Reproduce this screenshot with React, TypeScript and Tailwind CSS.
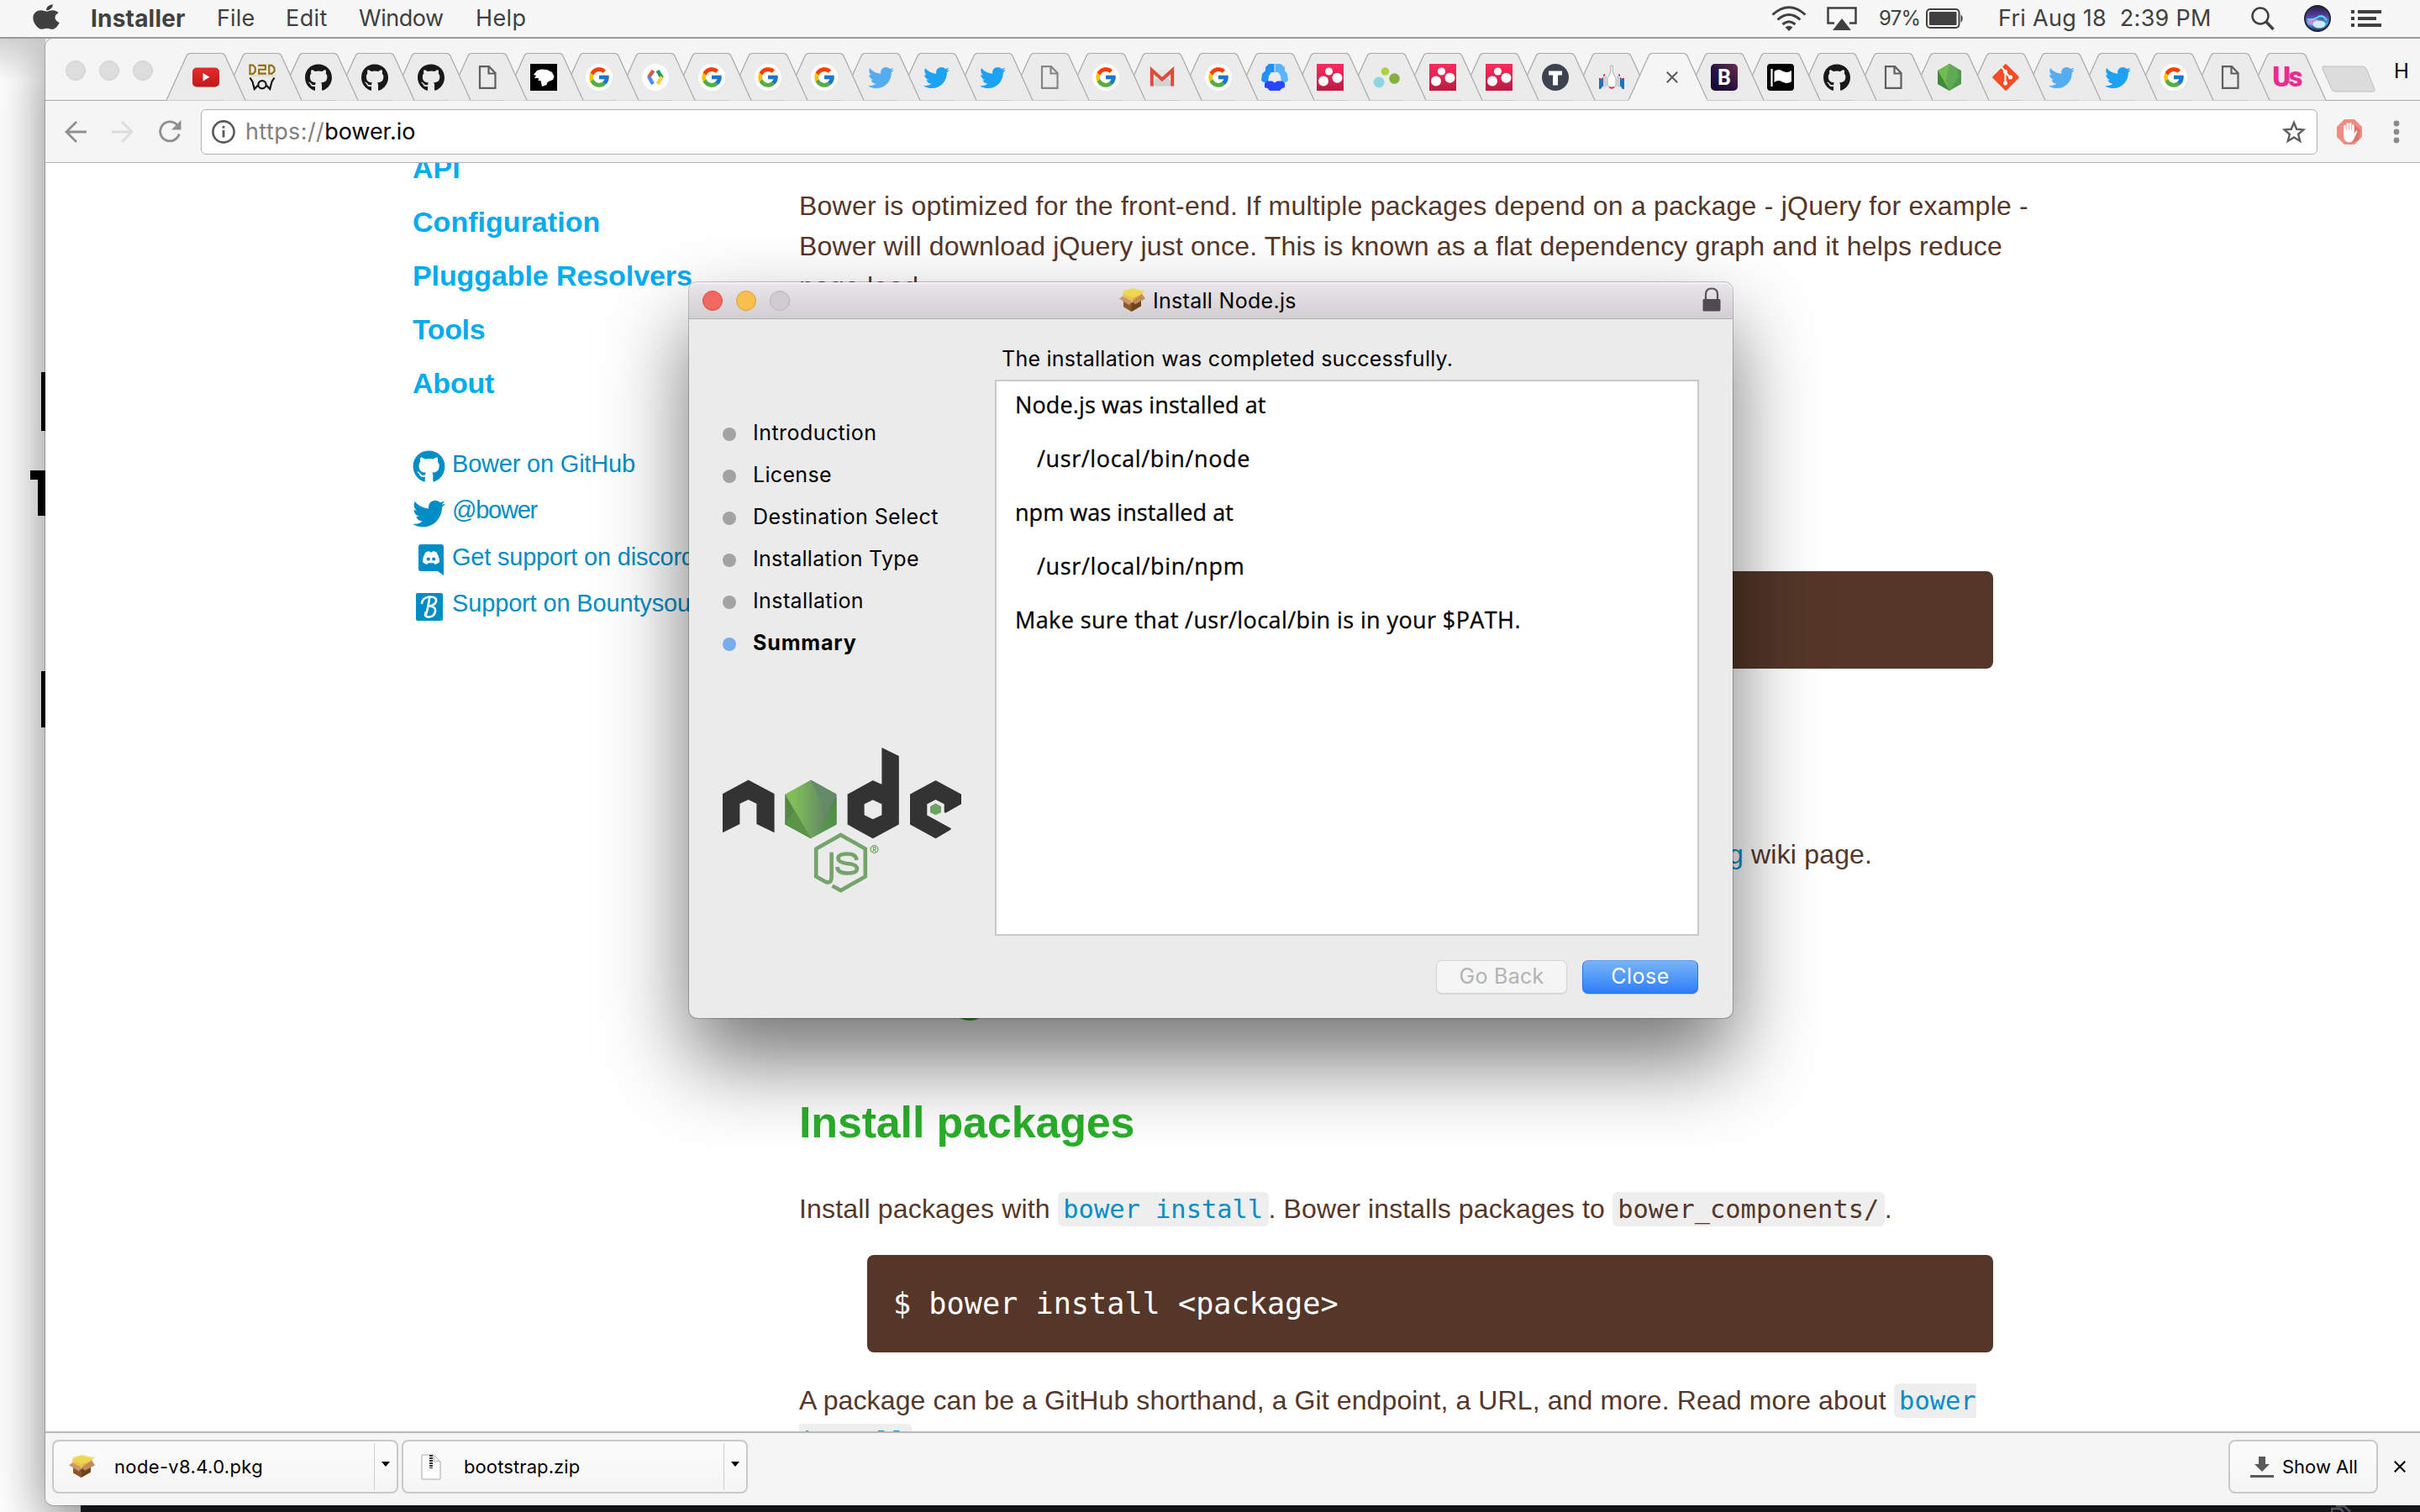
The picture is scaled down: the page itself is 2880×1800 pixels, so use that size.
import React from "react";
import { FaApple, FaGithub, FaTwitter } from "react-icons/fa";
import { FcGoogle } from "react-icons/fc";

/* ---------- shared icons ---------- */

const PackageIcon = ({ className }: { className: string }) => (
  <svg viewBox="0 0 31 30" className={className} preserveAspectRatio="none">
    <path d="M5 13 L15 18 L26 12 L26 22 L14.5 29 L5 23Z" fill="#8a5a2c" />
    <path d="M15 18 L26 12 L26 22 L14.5 29Z" fill="#6f431c" />
    <path d="M4 6 L15 1 L27 5 L16 12Z" fill="#e2c64a" />
    <path d="M4 6 L16 11.5 L14.5 17 L5 13Z" fill="#e8c455" />
    <path d="M16 11.5 L27 5 L26 12 L15 17Z" fill="#d9b93c" />
    <path d="M5 3 L16 0 L28 3 L31 3 L27 8 L16 12 L4 7Z" fill="#f0d94f" fillOpacity="0.85" />
    <path d="M4 10 L15 16 L12 21 L0 13Z" fill="#cf9767" />
    <path d="M27 7 L31 13 L19 20 L15 16Z" fill="#c58b5c" />
  </svg>
);

const ZipIcon = () => (
  <svg viewBox="0 0 24 31" className="ml-[3px] h-[31px] w-6">
    <path d="M1 1 H15 L23 9 V30 H1Z" fill="#fff" stroke="#a9a9a9" strokeWidth="1" />
    <path d="M15 1 L23 9 H15Z" fill="#ececec" stroke="#b5b5b5" strokeWidth="1" />
    <path d="M12 1 V17" stroke="#333" strokeWidth="4" strokeDasharray="2 1" />
  </svg>
);

/* ---------- favicons ---------- */

const GoogleIcon = () => (
  <span className="flex size-8 items-center justify-center rounded-full bg-white">
    <FcGoogle className="size-[28px]" />
  </span>
);

const DocIcon = ({ color = "#5f5f5f" }: { color?: string }) => (
  <svg viewBox="0 0 32 32" className="size-8">
    <path d="M7 3.2 H18 L25.5 11 V28.8 H7Z M17.5 3.5 V11.5 H25.5" fill="none" stroke={color} strokeWidth="2.2" />
  </svg>
);

const BerryIcon = () => (
  <svg viewBox="0 0 32 32" className="size-8">
    <defs>
      <linearGradient id="berry" x1="0" y1="0" x2="0" y2="1">
        <stop offset="0" stopColor="#ff2b5e" />
        <stop offset="1" stopColor="#b71c42" />
      </linearGradient>
    </defs>
    <rect width="32" height="32" fill="url(#berry)" />
    <circle cx="14.5" cy="9" r="4.6" fill="#fff" />
    <circle cx="24.5" cy="16.8" r="6" fill="#fff" />
    <circle cx="8" cy="20.5" r="6" fill="#fff" />
  </svg>
);

const favicons: Record<string, React.ReactNode> = {
  youtube: (
    <svg viewBox="0 0 32 32" className="size-8">
      <defs>
        <linearGradient id="yt" x1="0" y1="0" x2="0" y2="1">
          <stop offset="0" stopColor="#e52d27" />
          <stop offset="1" stopColor="#bf171d" />
        </linearGradient>
      </defs>
      <rect y="4.5" width="32" height="23" rx="5" fill="url(#yt)" />
      <path d="M12.5 11 L20.5 15.8 L12.5 20.6Z" fill="#fff" />
    </svg>
  ),
  d2d: (
    <svg viewBox="0 0 33 32" className="h-8 w-[33px]">
      <g fill="none" strokeWidth="2.2">
        <path stroke="#8f7112" d="M1.5 1 H5 L8 4 V9 L5 12 H1.5Z M11.500 1.500 H20.500 V6.500 H12.500 V11.500 H21.500 M25 1.500 H28.500 L31.500 4.500 V8.500 L28.500 11.500 H25Z" />
        <path stroke="#e6dfc4" d="M1 14 H33" />
        <path stroke="#111" d="M1.500 16.500 L4.500 21 L7 30.500 L11 26 M31.500 16.500 L28.500 21 L26 30.500 L22 26" />
        <circle cx="16.500" cy="25" r="4.800" stroke="#111" />
      </g>
    </svg>
  ),
  github: <FaGithub className="size-[33px] text-[#191717]" />,
  doc: <DocIcon />,
  docLight: <DocIcon color="#868686" />,
  lion: (
    <svg viewBox="0 0 32 32" className="size-8">
      <rect width="32" height="32" fill="#000" />
      <path d="M4 13 L8 8 L13 6.500 L20 7 L26 10 L28.500 15 L27 19 L23 20.500 L20.500 22 L19.500 25 L14 27 L12.500 20 L9.500 20 L10 17 L5 17 L7 14Z" fill="#fff" />
    </svg>
  ),
  google: <GoogleIcon />,
  dev: (
    <span className="flex size-8 items-center justify-center rounded-full bg-white">
      <svg viewBox="0 0 24 18" className="h-[18px] w-6" fill="none" strokeWidth="4.4">
        <path d="M9.5 1 L4 9" stroke="#dd5347" />
        <path d="M4 8 L9 17" stroke="#4c8bf5" />
        <path d="M14.5 1 L20 10" stroke="#1aa15f" />
        <path d="M20 8.5 L14.5 17" stroke="#ffce44" />
      </svg>
    </span>
  ),
  twitterLight: <FaTwitter className="size-[31px] text-[#55acee]" />,
  twitter: <FaTwitter className="size-[31px] text-[#1da1f2]" />,
  gmail: (
    <svg viewBox="0 0 32 32" className="size-8">
      <path d="M3 7 H29 V26.500 H3Z" fill="#e6e6e6" />
      <path d="M9 17 L16 21 L23 17 L29 26.500 H3Z" fill="#d2d2d2" />
      <path d="M3.800 26.500 V7.500 L16 18.500 L28.200 7.500 V26.500" fill="none" stroke="#dd4b39" strokeWidth="4" />
    </svg>
  ),
  rings: (
    <svg viewBox="0 0 32 32" className="size-8">
      <path d="M15.500 0 H9 L5 4 V8 L1 12 L0 20 L3 22 H8 L9 14 L12 10 H15.500Z" fill="#1e90ff" />
      <path d="M16.500 0 H23 L28 4 V8 L31 12 L32 20 L29 22 H24 L23 14 L20 10 H16.500Z" fill="#58b6ff" />
      <path d="M7 20.500 H13 L16 22.500 L19 20.500 H25 L28 23 V28 L24 29.500 L22 32 H10 L8 29.500 L4 28 V23Z" fill="#2846ff" />
    </svg>
  ),
  berry: <BerryIcon />,
  bubbles: (
    <svg viewBox="0 0 32 32" className="size-8">
      <circle cx="14.500" cy="9" r="4.800" fill="#aed13f" />
      <circle cx="25.500" cy="17.500" r="6.300" fill="#84b13c" />
      <circle cx="7" cy="22" r="6.500" fill="#8fd5e3" />
    </svg>
  ),
  t: (
    <svg viewBox="0 0 32 32" className="size-8">
      <circle cx="16" cy="16" r="16" fill="#3d444f" />
      <path d="M8 8.500 H24 V13.500 H19 V25.500 H13 V13.500 H8Z" fill="#fff" />
    </svg>
  ),
  rocket: (
    <svg viewBox="0 0 32 32" className="size-8">
      <path d="M1 19 L6 16 V26 L3 30 H1Z M31 19 L26 16 V26 L29 30 H31Z" fill="#1f72bb" />
      <path d="M6 15 L10 14 V27 L6 28Z M26 15 L22 14 V27 L26 28Z" fill="#cfd1d3" />
      <path d="M14.800 2 H17.200 V9 L19 14 L21 17 V25 L19 28 H13 L11 25 V17 L13 14 L14.800 9Z" fill="#fff" stroke="#a9abae" />
      <path d="M1 17 H3 V19 H1Z M29 17 H31 V19 H29Z M6 13 L8 12 V14 L6 15Z M26 13 L24 12 V14 L26 15Z M13 27 L16 28 L19 27 V28.500 L16 30 L13 28.500Z" fill="#e5203a" />
    </svg>
  ),
  bootstrap: (
    <span className="flex size-8 items-center justify-center rounded-[5px] bg-linear-to-bl from-[#6b2f52] via-[#2c1540] to-[#10082b] font-[Roboto] text-[25px] leading-none font-bold text-white">
      B
    </span>
  ),
  flag: (
    <svg viewBox="0 0 32 32" className="size-8">
      <rect width="32" height="32" rx="4" fill="#000" />
      <path d="M5.500 6 V27" stroke="#fff" strokeWidth="2.200" />
      <path d="M8.500 9 Q13 5.500 18 8.500 Q24 11.500 29 8 V21 Q24 24.500 18 21.500 Q13 18.500 8.500 22Z" fill="#fff" />
    </svg>
  ),
  node: (
    <svg viewBox="0 0 32 32" className="size-8">
      <path d="M16 0 L30 8 V24 L16 32 L2 24 V8Z" fill="#4f9a48" />
      <path d="M2 8 L16 0 L22 4 L16 32Z" fill="#72bb50" />
      <path d="M16 0 L25 5 L27 15 L16 32 L12 20Z" fill="#62a957" />
      <path d="M2 8 L16 32 L2 24Z" fill="#3f8a3c" />
    </svg>
  ),
  git: (
    <svg viewBox="0 0 32 32" className="size-8">
      <path d="M16 1.500 L30.500 16 L16 30.500 L1.500 16Z" fill="#f54d27" stroke="#f54d27" strokeWidth="2.500" strokeLinejoin="round" />
      <path d="M11 4 L15.500 9 V23 M15.500 10 L21 16" stroke="#fff" strokeWidth="2" fill="none" />
      <circle cx="15.500" cy="9.500" r="2.500" fill="#fff" />
      <circle cx="15.500" cy="23" r="2.500" fill="#fff" />
      <circle cx="21.500" cy="16" r="2.500" fill="#fff" />
    </svg>
  ),
  us: (
    <span className="font-[Roboto] text-[33px] leading-8 font-black tracking-[-2.500px] text-[#ed2a90]">Us</span>
  ),
  close: (
    <svg viewBox="0 0 14 14" className="ml-2.5 size-3.5">
      <path d="M0.800 0.800 L13.200 13.200 M13.200 0.800 L0.800 13.200" stroke="#5a5a5a" strokeWidth="2" />
    </svg>
  ),
};

const tabs = [
  "youtube", "d2d", "github", "github", "github", "doc", "lion", "google", "dev", "google",
  "google", "google", "twitterLight", "twitter", "twitter", "docLight", "google", "gmail", "google", "rings",
  "berry", "bubbles", "berry", "berry", "t", "rocket", "close", "bootstrap", "flag", "github",
  "doc", "node", "git", "twitterLight", "twitter", "google", "doc", "us",
];

const Tab = ({ name, index }: { name: string; index: number }) => {
  const active = name === "close";
  return (
    <div className="relative -mr-[27.080px] h-[57px] w-[94px] shrink-0" style={{ zIndex: active ? 60 : 50 - index }}>
      <svg viewBox="0 0 94 57" className="absolute inset-0 h-[57px] w-[94px] overflow-visible">
        <path
          d="M0 56.500 L24 3.500 Q25.500 0.500 28 0.500 H65.500 Q68.500 0.500 70 3.500 L94 56.500"
          fill={active ? "#f5f5f5" : "#ebebeb"}
          stroke="#a8a8a8"
          strokeWidth="1.200"
        />
        {active && <path d="M0.500 56.500 H93.500" stroke="#f5f5f5" strokeWidth="2" />}
      </svg>
      <div className="relative mt-[13px] ml-[31px] flex size-8 items-center justify-center">{favicons[name]}</div>
    </div>
  );
};

/* ---------- menu bar ---------- */

const MenuBar = () => (
  <header className="relative z-20 flex h-[46px] shrink-0 items-center border-b-2 border-[#9a9a9a] bg-[#f7f7f7] font-[Inter] text-[27px] leading-[44px] text-[#404040]">
    <FaApple className="mr-[37px] mb-1 ml-[39px] h-[34px] w-[32px]" preserveAspectRatio="none" />
    <span className="w-[150px] text-[28px] font-bold tracking-[0.200px]">Installer</span>
    <span className="w-[82px] tracking-[0.160px]">File</span>
    <span className="w-[87px] tracking-[0.400px]">Edit</span>
    <span className="w-[139px] tracking-[-0.470px]">Window</span>
    <span className="tracking-[0.380px]">Help</span>
    <div className="ml-auto flex h-[44px] items-center pr-[46px]">
      <div className="w-[66px]">
        <svg viewBox="0 0 42 30" className="h-[30px] w-[42px]" fill="none" stroke="#404040" strokeWidth="3">
          <path d="M1.500 10.500 Q21 -7 40.500 10.500 M7.500 16.500 Q21 4.500 34.500 16.500 M13.500 22 Q21 15.500 28.500 22" />
          <path d="M16.500 25.500 Q21 22 25.500 25.500 L21 30Z" fill="#404040" stroke="none" />
        </svg>
      </div>
      <div className="w-[62px]">
        <svg viewBox="0 0 36 28" className="h-7 w-9">
          <path d="M9 19.500 H1.500 V1.500 H34.500 V19.500 H27" fill="none" stroke="#404040" strokeWidth="2.500" />
          <path d="M18 14 L29 28 H7Z" fill="#404040" />
        </svg>
      </div>
      <span className="w-[56px] text-[24px] tracking-[-0.750px]">97%</span>
      <div className="w-[86px]">
        <svg viewBox="0 0 46 24" className="h-6 w-[46px]">
          <rect x="1" y="1" width="38.500" height="22" rx="4" fill="none" stroke="#404040" strokeWidth="2" />
          <rect x="4" y="4" width="32.500" height="16" rx="1" fill="#404040" />
          <path d="M41.500 7 Q46 12 41.500 17Z" fill="#404040" />
        </svg>
      </div>
      <span className="w-[301px] tracking-[0.280px] whitespace-pre">Fri Aug 18  2:39 PM</span>
      <div className="w-[63px]">
        <svg viewBox="0 0 28 28" className="size-7" fill="none" stroke="#404040">
          <circle cx="11" cy="11" r="9.500" strokeWidth="2.500" />
          <path d="M17.500 17.500 L26.500 27" strokeWidth="3.500" />
        </svg>
      </div>
      <div className="w-[56px]">
        <svg viewBox="0 0 32 32" className="size-8">
          <defs>
            <linearGradient id="siri" x1="0" y1="0" x2="0" y2="1">
              <stop offset="0" stopColor="#241c4e" />
              <stop offset="0.400" stopColor="#5a3f9e" />
              <stop offset="0.700" stopColor="#3ba6dc" />
              <stop offset="1" stopColor="#22306e" />
            </linearGradient>
          </defs>
          <circle cx="16" cy="16" r="15" fill="url(#siri)" stroke="#22252e" strokeWidth="2" />
          <ellipse cx="10.500" cy="20" rx="6.500" ry="4" fill="#e58be8" fillOpacity="0.800" />
          <ellipse cx="18" cy="23" rx="7.500" ry="4.500" fill="#dff4ff" fillOpacity="0.900" />
          <path d="M4 17 Q12 18 17 14 Q22 11 27 18" stroke="#4de0ef" strokeWidth="2" fill="none" />
        </svg>
      </div>
      <svg viewBox="0 0 36 20" className="h-5 w-9" fill="#404040">
        <path d="M0 0H4V4H0Z M8 0H36V4H8Z M0 8H4V12H0Z M8 8H30V12H8Z M0 16H4V20H0Z M8 16H36V20H8Z" />
      </svg>
    </div>
  </header>
);

/* ---------- browser ---------- */

const TabStrip = () => (
  <div className="relative z-10 flex h-[74px] shrink-0 items-end rounded-tl-[10px] border-b border-[#a8a8a8] bg-[#f5f5f5]">
    <div className="mt-[26px] mr-4 ml-6 flex gap-4 self-start">
      {[0, 1, 2].map((i) => (
        <span key={i} className="size-6 rounded-full border border-[#d0d0d0] bg-[#dddddd]" />
      ))}
    </div>
    <div className="-mb-px flex">
      {tabs.map((name, i) => (
        <Tab key={i} name={name} index={i} />
      ))}
    </div>
    <svg viewBox="0 0 66 32" className="mb-[9px] ml-[21px] h-8 w-[66px] shrink-0">
      <path d="M3 1 H49 Q53 1 54.500 4.500 L64 28 Q65 31 61.500 31 H18 Q14 31 12.500 27.500 L2 4 Q1 1 3 1Z" fill="#dcdcdc" stroke="#bdbdbd" />
    </svg>
    <span className="mb-[20px] ml-[21px] font-[Inter] text-[24px] leading-7 text-black">H</span>
  </div>
);

const Toolbar = () => (
  <div className="flex h-[74px] shrink-0 items-center border-b border-[#b3b3b3] bg-[#f5f5f5] pl-[23px]">
    <svg viewBox="0 0 26 26" className="size-[26px]" fill="none" stroke="#8f8f8f" strokeWidth="2.800">
      <path d="M26 13 H2 M14 1 L2 13 L14 25" />
    </svg>
    <svg viewBox="0 0 26 26" className="ml-[30px] size-[26px]" fill="none" stroke="#dcdcdc" strokeWidth="2.800">
      <path d="M0 13 H24 M12 1 L24 13 L12 25" />
    </svg>
    <svg viewBox="0 0 28 27" className="ml-[29px] h-[27px] w-7" fill="none">
      <path d="M22.500 5.500 A11.500 11.500 0 1 0 25.200 16.500" stroke="#8f8f8f" strokeWidth="2.800" />
      <path d="M27.500 0 V11.500 H16Z" fill="#8f8f8f" />
    </svg>
    <div className="ml-[23px] flex h-[54px] w-[2519px] items-center rounded-[6px] border border-[#b0b0b0] bg-white pl-3 font-[Inter] text-[27px]">
      <svg viewBox="0 0 28 28" className="mr-3 size-7" fill="none" stroke="#5a5a5a">
        <circle cx="14" cy="14" r="12.600" strokeWidth="2.600" />
        <path d="M14 12 V20.500 M14 7 V9.800" strokeWidth="2.800" />
      </svg>
      <span className="pt-0.5 tracking-[0.400px] text-[#7f7f7f]">https://</span>
      <span className="pt-0.5 tracking-[-0.050px] text-black">bower.io</span>
      <svg viewBox="0 0 28 28" className="mr-[13px] ml-auto size-7" fill="none" stroke="#5f5f5f" strokeWidth="2.400">
        <path d="M14 3 L17.200 10.800 L25.500 11.400 L19.100 16.800 L21.200 25 L14 20.500 L6.800 25 L8.900 16.800 L2.500 11.400 L10.800 10.800Z" />
      </svg>
    </div>
    <svg viewBox="0 0 30 30" className="ml-[23px] size-[30px]">
      <path d="M9 0 H21 L30 9 V21 L21 30 H9 L0 21 V9Z" fill="#ef8d83" />
      <path d="M17 28 L26 25 L28 12 L20 6Z" fill="#d9776c" />
      <path d="M9.500 17 V8 M12.800 15 V5.500 M16.100 15 V5.500 M19.400 16 V7.500" stroke="#fff" strokeWidth="2.600" strokeLinecap="round" />
      <path d="M8.200 13 H20.700 V18 L23 13.500 Q24.500 13.500 24 15.500 L20 24 Q18 27.500 14.500 27.500 Q8.200 27 8.200 19Z" fill="#fff" />
    </svg>
    <svg viewBox="0 0 8 28" className="ml-[37px] h-7 w-2" fill="#8a8a8a">
      <circle cx="4" cy="4" r="3.400" />
      <circle cx="4" cy="14" r="3.400" />
      <circle cx="4" cy="24" r="3.400" />
    </svg>
  </div>
);

const SideLink = ({ icon, children, className }: { icon: React.ReactNode; children: React.ReactNode; className: string }) => (
  <li className={`flex h-[55.500px] items-center ${className}`}>
    <span className="flex w-[47px] shrink-0">{icon}</span>
    {children}
  </li>
);

const Sidebar = () => (
  <nav className="-mt-[26px] w-[460px] shrink-0 font-['Liberation_Sans'] whitespace-nowrap">
    <ul className="text-[34px] leading-[64px] font-bold text-[#00acee]">
      <li>API</li>
      <li className="tracking-[0.030px]">Configuration</li>
      <li className="tracking-[-0.090px]">Pluggable Resolvers</li>
      <li className="tracking-[-0.400px]">Tools</li>
      <li className="tracking-[-0.200px]">About</li>
    </ul>
    <ul className="mt-9 text-[29px] leading-[56px] text-[#008dc5]">
      <SideLink className="tracking-[-0.200px]" icon={<FaGithub className="mt-2 size-[39px]" />}>Bower on GitHub</SideLink>
      <SideLink className="tracking-[-1.250px]" icon={<FaTwitter className="mt-2 size-[39px]" />}>@bower</SideLink>
      <SideLink
        className="tracking-[-0.210px]"
        icon={
          <svg viewBox="0 0 30 37" className="mt-2 ml-[7px] h-[37px] w-[30px]">
            <path d="M3 0 H27 Q30 0 30 3 V37 L23 32 H3 Q0 32 0 29 V3 Q0 0 3 0Z" fill="#008dc5" />
            <path d="M8.500 9.500 Q11 8 13 8.200 L14 9.500 H16 L17 8.200 Q19 8 21.500 9.500 Q25 15 25 21 Q22.500 23.800 19.500 24 L18.500 22.300 H11.500 L10.500 24 Q7.500 23.800 5 21 Q5 15 8.500 9.500Z" fill="#fff" />
            <circle cx="11.800" cy="17.500" r="2.100" fill="#008dc5" />
            <circle cx="18.200" cy="17.500" r="2.100" fill="#008dc5" />
          </svg>
        }
      >
        Get support on discord
      </SideLink>
      <SideLink
        className="tracking-[-0.150px]"
        icon={
          <svg viewBox="0 0 32 33" className="mt-2 ml-1 h-[33px] w-8">
            <rect width="32" height="33" rx="2" fill="#008dc5" />
            <path d="M7 12 Q8 5 17 4.500 Q25 4.500 24 10 Q22.500 14.500 16 15.500 Q24 16 23 22 Q21.500 29 14 28.500 Q10 28 11.500 23.500 M16 7 Q14 20 11.500 27" fill="none" stroke="#fff" strokeWidth="2.600" strokeLinecap="round" />
          </svg>
        }
      >
        Support on Bountysource
      </SideLink>
    </ul>
  </nav>
);

const Code = ({ children, link }: { children: React.ReactNode; link?: boolean }) => (
  <code
    className={`rounded-[6px] bg-[#eeeeee] px-[6.400px] py-[3px] font-['DejaVu_Sans_Mono'] text-[30.400px] leading-none tracking-normal ${link ? "text-[#008dc5]" : "text-[#543729]"}`}
  >
    {children}
  </code>
);

const Article = () => (
  <article className="w-[1500px] shrink-0 pt-[27px] font-['Liberation_Sans'] text-[32px] leading-[48px] tracking-[0.180px] whitespace-nowrap text-[#543729]">
    <p>
      <span className="tracking-[0.220px]">
        Bower is optimized for the front-end. If multiple packages depend on a package - jQuery for example -
      </span>
      <br />
      <span className="tracking-[0.170px]">Bower will download jQuery just once. This is known as a flat dependency graph and it helps reduce</span>
      <br />
      page load.
    </p>
    <pre className="mt-[315px] ml-[81px] h-[116px] w-[1340px] rounded-[8px] bg-[#543729]" />
    <p className="mt-[197px] pl-[1106px]">
      <a className="text-[#008dc5]">g</a> wiki page.
    </p>
    <h2 className="mt-[97px] text-[66px] leading-[80px] font-bold tracking-[-1.200px] text-[#2bae2b]">Getting started</h2>
    <h3 className="mt-[86px] text-[52px] leading-[64px] font-bold tracking-[-0.150px] text-[#2bae2b]">Install packages</h3>
    <p className="mt-[47px] h-12">
      <span className="tracking-[0.170px]">Install packages with </span>
      <Code link>bower install</Code>
      <span className="tracking-[0.130px]">. Bower installs packages to </span>
      <Code>bower_components/</Code>.
    </p>
    <pre className="mt-[31px] ml-[81px] h-[116px] w-[1340px] rounded-[8px] bg-[#543729] pl-[31px] font-['DejaVu_Sans_Mono'] text-[35.200px] leading-[116px] tracking-normal text-white">
      $ bower install &lt;package&gt;
    </pre>
    <p className="mt-[33px]">
      <span className="tracking-[0.110px]">A package can be a GitHub shorthand, a Git endpoint, a URL, and more. Read more about </span>
      <Code link>
        bower
        <br />
        install
      </Code>
      .
    </p>
  </article>
);

const Download = ({ icon, name, className }: { icon: React.ReactNode; name: string; className: string }) => (
  <div className="mr-[4.500px] flex h-16 w-[411.500px] items-center rounded-[8px] border-2 border-[#c9c9c9] bg-linear-to-b from-[#fcfcfc] to-[#f5f5f5] pl-[18px]">
    <span className="flex w-[54px]">{icon}</span>
    <span className={className}>{name}</span>
    <span className="ml-auto flex h-14 w-[27px] items-center justify-center border-l border-[#cfcfcf] pb-1.5">
      <svg viewBox="0 0 10 6" className="h-1.5 w-2.5">
        <path d="M0 0 H10 L5 6Z" />
      </svg>
    </span>
  </div>
);

const DownloadShelf = () => (
  <footer className="flex h-[88px] shrink-0 items-start rounded-bl-[10px] border-t-2 border-[#b8b8b8] bg-[#f5f5f5] pt-2 pr-[17px] pl-2 font-[Inter] text-[22px] text-black">
    <Download icon={<PackageIcon className="h-7 w-[31px]" />} name="node-v8.4.0.pkg" className="tracking-[0.350px]" />
    <Download icon={<ZipIcon />} name="bootstrap.zip" className="tracking-[0.100px]" />
    <div className="ml-auto flex h-16 w-[178px] items-center rounded-[8px] border-2 border-[#c9c9c9] bg-linear-to-b from-[#fcfcfc] to-[#f5f5f5] pl-6">
      <svg viewBox="0 0 28 25" className="mr-[10px] h-[25px] w-7" fill="#5a5a5a">
        <path d="M10 0 H18 V9 H23 L14 18 L5 9 H10Z M0 22 H28 V25 H0Z" />
      </svg>
      <span>Show All</span>
    </div>
    <svg viewBox="0 0 14 14" className="mt-[25px] ml-[19px] size-3.5">
      <path d="M0.800 0.800 L13.200 13.200 M13.200 0.800 L0.800 13.200" stroke="#000" strokeWidth="2" />
    </svg>
  </footer>
);

/* ---------- installer ---------- */

const NodeLogo = () => (
  <svg viewBox="860 885 290 180" className="h-[180px] w-[290px]">
    <defs>
      <linearGradient id="hex" x1="0" y1="0" x2="1" y2="0">
        <stop offset="0.150" stopColor="#80bf58" />
        <stop offset="0.900" stopColor="#5f7f68" />
      </linearGradient>
      <linearGradient id="hexEdge" x1="0" y1="1" x2="1" y2="0">
        <stop offset="0" stopColor="#5c9a58" />
        <stop offset="1" stopColor="#4d8a3f" />
      </linearGradient>
    </defs>
    <g fill="#333333">
      <path d="M860 945 L890.600 928.500 L921.600 945 V991.300 L900.400 981 V956.700 L890.600 952 L880.400 956.700 V981 L860 991.300Z" />
      <path
        fillRule="evenodd"
        d="M1008.600 945.600 L1038.800 929 L1049.400 933.700 V890 L1069.800 900 V981.600 L1038.800 998.300 L1008.600 981.600Z M1038.800 952.300 L1028.600 957.300 V970.300 L1038.800 975.300 L1049.400 970.300 V957.300Z"
      />
      <path d="M1083 945.600 L1113.500 929 L1144 945.600 V957.300 L1125 968 L1123.700 966.500 V957.300 L1113.500 952 L1103.300 957.300 V970.600 L1132 986.300 L1131 988 L1113.500 998.300 L1083 981.600Z" />
    </g>
    <path d="M1113.500 956.600 L1120 960 V967.300 L1113.500 970.300 L1107 967.300 V960Z" fill="#6fa167" />
    <path d="M934.300 945.600 L965 928.500 L995.500 945.600 V981.600 L965 998.300 L934.300 981.600Z" fill="url(#hex)" />
    <path d="M934.300 945.600 L965 998.300 L934.300 981.600Z" fill="#538845" />
    <path d="M934.300 980 L945 965 L965 998.300Z" fill="#599449" />
    <path d="M965 928.500 L995.500 945.600 L984 970Z" fill="#648b67" />
    <path d="M995.500 949 V981.600 L974 993Z" fill="url(#hexEdge)" />
    <g fill="none" stroke="#74a36c" strokeWidth="4.600">
      <path d="M989.600 1014.500 V1044 Q989.600 1052 983 1050 L971.200 1043.500 V1010.500 L1000.500 994 L1029.800 1010.500 V1043.500 L1000.500 1060 L990.500 1054.500" />
      <path d="M1019.500 1024 Q1019 1016.500 1008 1016.500 Q997.500 1016.500 997.500 1022 Q997.500 1026.500 1008 1028 Q1020 1029 1020 1034 Q1020 1039.500 1008.500 1039.500 Q996.500 1039.500 996.500 1032" />
      <circle cx="1040.500" cy="1011" r="4.400" strokeWidth="1.300" />
    </g>
    <text x="1038.200" y="1013.600" fontSize="7" fontFamily="Inter" fontWeight="700" fill="#74a36c">R</text>
  </svg>
);

const steps: [string, string][] = [
  ["Introduction", "tracking-[0.450px]"],
  ["License", "tracking-[0.330px]"],
  ["Destination Select", "tracking-[0.400px]"],
  ["Installation Type", "tracking-[0.300px]"],
  ["Installation", "tracking-[0.400px]"],
  ["Summary", "font-bold tracking-[0.850px]"],
];

const Installer = () => (
  <section className="absolute top-[336px] left-[820px] z-30 flex h-[876px] w-[1242px] flex-col rounded-[10px] bg-[#ebebeb] font-[Inter] text-[25px] text-black shadow-[0_0_0_1px_rgba(0,0,0,0.220),0_50px_100px_rgba(0,0,0,0.550)]">
    <div className="flex h-[44px] shrink-0 items-center rounded-t-[10px] border-b border-[#b1afb2] bg-linear-to-b from-[#e9e7ea] to-[#d1cfd2] pr-[14px] pl-4 shadow-[inset_0_2px_0_rgba(255,255,255,0.450)]">
      <div className="flex gap-4">
        <span className="size-6 rounded-full border border-[#dc4a44] bg-[#f0685f]" />
        <span className="size-6 rounded-full border border-[#dda035] bg-[#f7bf4e]" />
        <span className="size-6 rounded-full border border-[#b5b3b6] bg-[#cfcdd0]" />
      </div>
      <PackageIcon className="ml-[392px] h-[29px] w-[31px]" />
      <span className="ml-[9px] pt-0.5 tracking-[0.300px]">Install Node.js</span>
      <svg viewBox="0 0 22 29" className="mb-[3px] ml-auto h-[29px] w-[22px]">
        <path d="M4 15 V8.500 Q4 1.500 11 1.500 Q18 1.500 18 8.500 V15" fill="none" stroke="#555355" strokeWidth="2.200" />
        <rect x="0.500" y="14" width="21" height="14.500" rx="1.500" fill="#4e4c4e" />
      </svg>
    </div>
    <div className="flex flex-1">
      <div className="w-[364px] shrink-0 pt-[110px] pl-10">
        <ul>
          {steps.map(([label, cls], i) => (
            <li key={label} className="flex h-[50px] items-center pt-0.5">
              <span className={`mt-0.5 mr-5 size-4 rounded-full ${i === 5 ? "bg-[#76aeec]" : "bg-[#a3a3a3]"}`} />
              <span className={cls}>{label}</span>
            </li>
          ))}
        </ul>
        <div className="mt-[95px]">
          <NodeLogo />
        </div>
      </div>
      <div className="flex w-[838px] flex-col pt-[31px]">
        <p className="pl-2 leading-8 tracking-[0.240px]">The installation was completed successfully.</p>
        <div className="mt-[9px] h-[662px] border-2 border-[#c9c9c9] bg-white pl-[22px] font-['Open_Sans'] text-[27px] leading-[64px] font-medium whitespace-nowrap [-webkit-text-stroke:0.300px_black]">
          <p className="-mt-1 tracking-[0.120px]">Node.js was installed at</p>
          <p className="pl-[26px] tracking-[0.620px]">/usr/local/bin/node</p>
          <p className="tracking-[0.060px]">npm was installed at</p>
          <p className="pl-[26px] tracking-[0.640px]">/usr/local/bin/npm</p>
          <p className="tracking-[0.400px]">Make sure that /usr/local/bin is in your $PATH.</p>
        </div>
        <div className="mt-[29px] flex justify-end gap-[18px] pr-px">
          <button className="h-10 w-[156px] rounded-[7px] border border-[#d3d3d3] bg-[#f5f5f5] tracking-[0.270px] text-[#b3b3b3] shadow-[0_1px_1px_rgba(0,0,0,0.080)]">
            Go Back
          </button>
          <button className="h-10 w-[138px] rounded-[7px] border border-[#2a74f0] border-t-[#5ca0f2] bg-linear-to-b from-[#79b3f5] to-[#2a7efb] tracking-[0.450px] text-white shadow-[0_1px_1px_rgba(0,0,0,0.150)]">
            Close
          </button>
        </div>
      </div>
    </div>
  </section>
);

/* ---------- desktop ---------- */

export default function App() {
  return (
    <div className="relative flex h-[1800px] w-[2880px] flex-col overflow-hidden bg-white">
      <MenuBar />
      <div className="relative flex h-[1754px]">
        <div className="relative w-[54px] shrink-0 bg-linear-to-b from-[#d4d4d4] to-white to-[50px]">
          <span className="absolute top-[397px] left-[49px] h-[70px] w-[5px] bg-black" />
          <span className="absolute top-[514px] left-9 h-[11px] w-[18px] bg-black" />
          <span className="absolute top-[514px] left-[45px] h-[54px] w-[9px] bg-black" />
          <span className="absolute top-[753px] left-[49px] h-[67px] w-[5px] bg-black" />
        </div>
        <div className="absolute bottom-0 left-24 flex h-6 w-[2784px] items-end justify-end overflow-hidden bg-[#1d1f23] pr-[80px]">
          <svg viewBox="0 0 26 8" className="h-2 w-[26px]" fill="none" stroke="#7b8192" strokeWidth="2.500">
            <path d="M6 1 H16 L23 8 M1 8 V4 H11 L15 8" />
          </svg>
        </div>
        <main className="relative z-10 flex h-[1746px] w-[2826px] flex-col rounded-l-[10px] shadow-[0_0_0_1px_rgba(0,0,0,0.200),0_20px_64px_rgba(0,0,0,0.500)]">
          <TabStrip />
          <Toolbar />
          <div className="flex h-[1510px] overflow-hidden bg-white pl-[437px]">
            <Sidebar />
            <Article />
          </div>
          <DownloadShelf />
        </main>
      </div>
      <Installer />
    </div>
  );
}
